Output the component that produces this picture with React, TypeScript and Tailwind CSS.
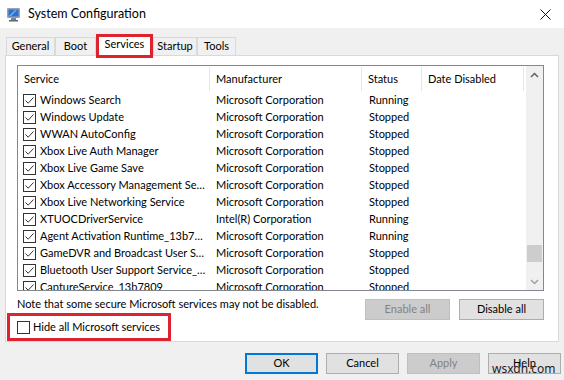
import React from "react";

type Row = { name: string; maker: string; status: string };

const rows: Row[] = [
  { name: "Windows Search", maker: "Microsoft Corporation", status: "Running" },
  { name: "Windows Update", maker: "Microsoft Corporation", status: "Stopped" },
  { name: "WWAN AutoConfig", maker: "Microsoft Corporation", status: "Stopped" },
  { name: "Xbox Live Auth Manager", maker: "Microsoft Corporation", status: "Stopped" },
  { name: "Xbox Live Game Save", maker: "Microsoft Corporation", status: "Stopped" },
  { name: "Xbox Accessory Management Se…", maker: "Microsoft Corporation", status: "Stopped" },
  { name: "Xbox Live Networking Service", maker: "Microsoft Corporation", status: "Stopped" },
  { name: "XTUOCDriverService", maker: "Intel(R) Corporation", status: "Running" },
  { name: "Agent Activation Runtime_13b7…", maker: "Microsoft Corporation", status: "Running" },
  { name: "GameDVR and Broadcast User S…", maker: "Microsoft Corporation", status: "Stopped" },
  { name: "Bluetooth User Support Service_…", maker: "Microsoft Corporation", status: "Stopped" },
  { name: "CaptureService_13b7809", maker: "Microsoft Corporation", status: "Stopped" },
];

const CheckBox = ({ checked }: { checked: boolean }) => (
  <div className="w-[13px] h-[13px] border border-[#333333] bg-white flex items-center justify-center shrink-0">
    {checked && (
      <svg width="11" height="11" viewBox="0 0 11 11">
        <path d="M1.5 5.5 L4.2 8.2 L9.5 2.5" fill="none" stroke="#333333" strokeWidth="1" />
      </svg>
    )}
  </div>
);

const Tab = ({ label, w }: { label: string; w: string }) => (
  <div
    className={`${w} mt-[3px] h-[18px] border-t border-l border-r border-[#d9d9d9] bg-[#f0f0f0] flex items-center justify-center`}
  >
    {label}
  </div>
);

const Btn = ({
  label,
  w,
  disabled,
  primary,
}: {
  label: string;
  w: string;
  disabled?: boolean;
  primary?: boolean;
}) => (
  <div
    className={`${w} h-[21px] flex items-center justify-center ${
      disabled
        ? "bg-[#cccccc] border border-[#bfbfbf] text-[#838383]"
        : primary
        ? "bg-[#e1e1e1] border-2 border-[#0078d7] text-black"
        : "bg-[#e1e1e1] border border-[#adadad] text-black"
    }`}
  >
    {label}
  </div>
);

const App = () => {
  return (
    <div className="w-[564px] h-[380px] bg-[#f0f0f0] font-['Lato','Noto_Sans',sans-serif] text-[11px] text-black relative overflow-hidden">
      {/* Title bar */}
      <div className="h-[28px] bg-white flex items-center pl-[6px] pr-[13px]">
        <svg width="15" height="15" viewBox="0 0 15 15">
          <rect x="1" y="1" width="13" height="10" rx="1" fill="#9aa4b0" />
          <rect x="2.5" y="2.5" width="10" height="7" fill="#2b6fcf" />
          <path d="M3 9 L9 3 L11 3 L5 9 Z" fill="#8fc0f5" opacity="0.8" />
          <rect x="5" y="11" width="5" height="2" fill="#7b838d" />
          <rect x="3" y="13" width="9" height="1.5" fill="#5e656e" />
        </svg>
        <span className="ml-[7px] text-[12.5px] leading-none">System Configuration</span>
        <div className="flex-1" />
        <svg width="11" height="11" viewBox="0 0 11 11">
          <path d="M0.5 0.5 L10.5 10.5 M10.5 0.5 L0.5 10.5" stroke="#111111" strokeWidth="1" />
        </svg>
      </div>

      {/* Tabs */}
      <div className="mt-[6px] h-[21px] flex items-start pl-[6px]">
        <Tab label="General" w="w-[49px]" />
        <Tab label="Boot" w="w-[41px]" />
        <div className="relative z-10 w-[57px] h-[24px] border-[3px] border-[#de2330] bg-white flex items-center justify-center pb-[3px]">
          Services
        </div>
        <Tab label="Startup" w="w-[44px]" />
        <Tab label="Tools" w="w-[39px]" />
      </div>

      {/* Panel */}
      <div className="ml-[5px] w-[554px] h-[287px] bg-white border border-[#d9d9d9] pl-[11px] pt-[9px]">
        {/* List */}
        <div className="w-[527px] h-[226px] border border-[#828790] flex">
          <div className="flex-1 overflow-hidden">
            <div className="h-[25px] flex items-center pt-[1px]">
              <div className="w-[192px] pl-[6px] h-full flex items-center border-r border-[#e5e5e5]">Service</div>
              <div className="w-[152px] pl-[6px] h-full flex items-center border-r border-[#e5e5e5]">Manufacturer</div>
              <div className="w-[60px] pl-[6px] h-full flex items-center border-r border-[#e5e5e5]">Status</div>
              <div className="w-[102px] pl-[6px] h-full flex items-center border-r border-[#e5e5e5]">Date Disabled</div>
            </div>
            {rows.map((r) => (
              <div key={r.name} className="h-[17px] flex items-center whitespace-nowrap pt-[1px]">
                <div className="w-[192px] pl-[5px] flex items-center gap-[4px] overflow-hidden">
                  <CheckBox checked />
                  <span>{r.name}</span>
                </div>
                <div className="w-[152px] pl-[6px] overflow-hidden">{r.maker}</div>
                <div className="w-[60px] pl-[7px] overflow-hidden">{r.status}</div>
              </div>
            ))}
          </div>
          {/* Scrollbar */}
          <div className="w-[17px] bg-[#f0f0f0] flex flex-col items-center">
            <div className="h-[17px] flex items-center justify-center">
              <svg width="9" height="6" viewBox="0 0 9 6">
                <path d="M1 5 L4.5 1.5 L8 5" fill="none" stroke="#606060" strokeWidth="1.5" />
              </svg>
            </div>
            <div className="flex-1 w-full flex flex-col justify-end pb-[11px]">
              <div className="mx-[1px] h-[17px] bg-[#cdcdcd]" />
            </div>
            <div className="h-[17px] flex items-center justify-center">
              <svg width="9" height="6" viewBox="0 0 9 6">
                <path d="M1 1 L4.5 4.5 L8 1" fill="none" stroke="#a0a0a0" strokeWidth="1.5" />
              </svg>
            </div>
          </div>
        </div>

        {/* Note + buttons */}
        <div className="w-[527px] mt-[4px] flex justify-between items-start">
          <div className="flex flex-col">
            <div className="h-[16px] leading-[16px] whitespace-nowrap pt-[1px]">
              Note that some secure Microsoft services may not be disabled.
            </div>
            <div className="mt-[2px] -ml-[10px] w-[164px] h-[28px] border-[3px] border-[#de2330] flex items-center pl-[7px] gap-[3px] whitespace-nowrap">
              <CheckBox checked={false} />
              <span>Hide all Microsoft services</span>
            </div>
          </div>
          <div className="mt-[4px] flex gap-[9px]">
            <Btn label="Enable all" w="w-[85px]" disabled />
            <Btn label="Disable all" w="w-[85px]" />
          </div>
        </div>
      </div>

      {/* Dialog buttons */}
      <div className="mt-[11px] flex justify-end gap-[8px] pr-[3px]">
        <Btn label="OK" w="w-[73px]" primary />
        <Btn label="Cancel" w="w-[73px]" />
        <Btn label="Apply" w="w-[73px]" disabled />
        <Btn label="Help" w="w-[73px]" />
      </div>

      <div className="absolute left-[492px] top-[363px] text-[12px] leading-none text-[#222222] font-['Noto_Sans',sans-serif]">
        wsxdn.com
      </div>
    </div>
  );
};

export default App;
